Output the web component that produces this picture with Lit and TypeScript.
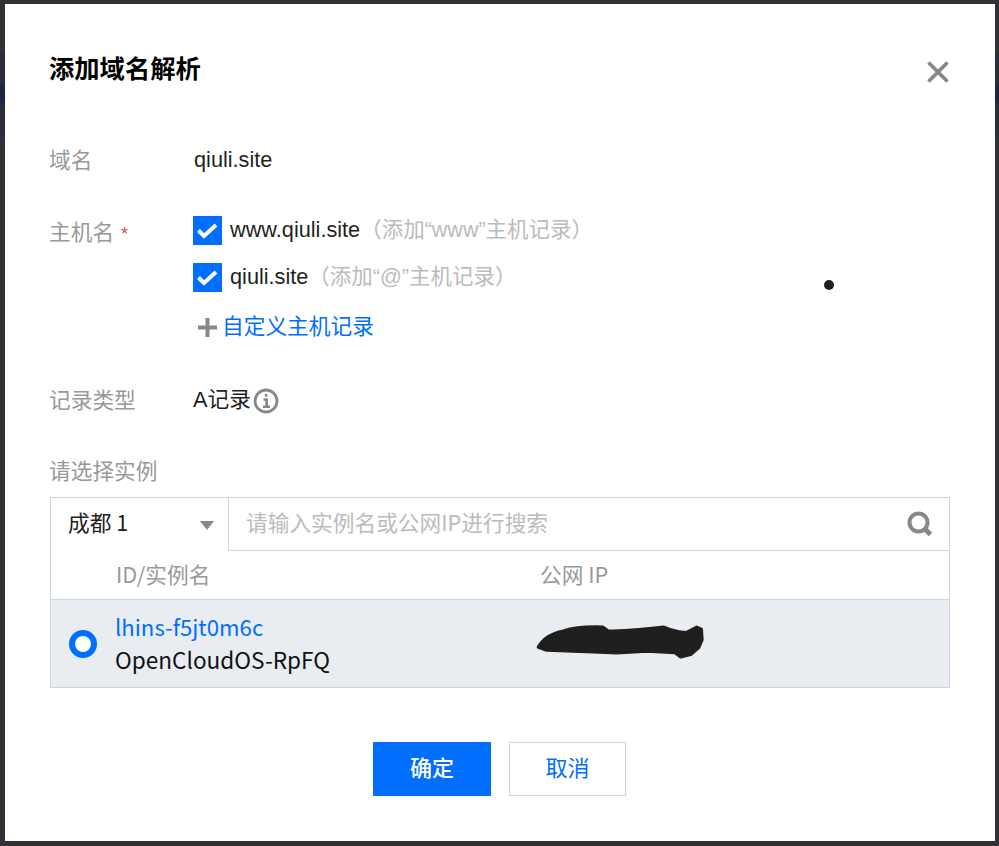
import { LitElement, html, css, svg } from "lit";
import { customElement } from "lit/decorators.js";

const check = html`<svg class="tick" viewBox="0 0 29 29"><path d="M5.5 14.5l5.5 5.5L23 9" fill="none" stroke="#fff" stroke-width="4"/></svg>`;

@customElement("app-root")
export class AppRoot extends LitElement {
  static styles = css`
    :host {
      display: block;
      height: 846px;
      background: #313236;
      font-family: "Liberation Sans", "Noto Sans CJK SC", sans-serif;
      font-size: 21.7px;
      color: #1f1f1f;
      overflow: hidden;
    }
    .stage { position: relative; height: 846px; display: flex; padding: 4px 4px 5px 5px; box-sizing: border-box; }
    .edge { position: absolute; top: 53px; height: 85px; background: #2b2e38; }
    .edge.l { left: 0; width: 5px; }
    .edge.r { right: 0; width: 4px; }
    .edge i { display: block; margin-top: 32px; height: 18px; background: #1d2340; }
    .dialog { position: relative; flex: 1; background: #fff; padding: 0 45px 0 44px; box-sizing: border-box; display: flex; flex-direction: column; }
    h1 { margin: 47px 0 0; font-size: 25.3px; line-height: 36px; font-weight: 700; color: #000; }
    .close { position: absolute; left: 921px; top: 56px; width: 24px; height: 24px; }
    .row { display: flex; }
    .label { width: 144px; flex: none; color: #999; line-height: 32px; }
    .label.low { padding-top: 1px; }
    .r1 { margin-top: 58px; }
    .r2 { margin-top: 39px; }
    .r3 { margin-top: 45px; }
    .star { color: #e54545; font-size: 18px; margin-left: 7px; }
    .val { line-height: 32px; margin: -1px 0 0 1px; }
    .checks { display: flex; flex-direction: column; }
    .chk { display: flex; align-items: center; height: 29px; gap: 8px; margin-bottom: 18px; line-height: 29px; }
    .txt { margin-bottom: 2px; }
    .box { width: 29px; height: 29px; background: #006eff; flex: none; display: block; }
    .tick { display: block; width: 29px; height: 29px; }
    .hint { color: #bbb; font-size: 21.5px; }
    .add { display: flex; align-items: center; height: 32px; margin-top: -2px; padding-left: 5px; color: #006eff; }
    .plus { width: 19px; height: 19px; margin: 7px 5px 0 0; }
    .rec { display: flex; align-items: center; height: 32px; line-height: 32px; margin-top: -1px; }
    .info { width: 26px; height: 26px; margin: 2px 0 0 2px; }
    .pick { margin-top: 39px; color: #999; line-height: 32px; }
    .table { margin: 9px 0 0 1px; border: 1px solid #cfd5de; box-sizing: border-box; height: 191px; display: flex; flex-direction: column; font-family: "Noto Sans CJK SC", sans-serif; }
    .bar { display: flex; height: 53px; flex: none; }
    .bar .t { margin-top: -6px; }
    .select { width: 177px; flex: none; box-sizing: border-box; padding-left: 17px; display: flex; align-items: center; justify-content: space-between; padding-right: 14px; }
    .arrow { width: 14px; height: 9px; margin-top: 2px; }
    .search { flex: 1; border-left: 1px solid #cfd5de; border-bottom: 1px solid #cfd5de; display: flex; align-items: center; justify-content: space-between; padding: 0 16px 0 17px; color: #bbb; }
    .mag { width: 26px; height: 26px; }
    .head { display: flex; height: 49px; flex: none; align-items: center; color: #999; border-bottom: 1px solid #cfd5de; box-sizing: border-box; padding-bottom: 4px; }
    .c1 { width: 489px; padding-left: 65px; box-sizing: border-box; flex: none; }
    .item { flex: 1; display: flex; background: #e9ecf1; align-items: center; }
    .radio { width: 28px; height: 28px; box-sizing: border-box; border: 6px solid #006eff; border-radius: 50%; background: #fff; margin-left: 18px; flex: none; }
    .names { width: 426px; padding-left: 18px; box-sizing: border-box; flex: none; line-height: 33px; color: #111; margin-top: -2px; font-size: 22.6px; }
    .link { color: #006eff; display: block; font-size: 22.2px; }
    .scribble { width: 170px; height: 37px; display: block; margin: -4px 0 0 12px; }
    .foot { display: flex; justify-content: center; gap: 18px; margin-top: 54px; }
    .btn { width: 118px; height: 54px; box-sizing: border-box; display: flex; align-items: center; justify-content: center; padding-bottom: 6px; font-family: "Noto Sans CJK SC", sans-serif; font-size: 22px; }
    .ok { background: #006eff; color: #fff; font-weight: 500; }
    .no { background: #fff; color: #006eff; border: 1px solid #cfd5de; width: 117px; }
    .dot { position: absolute; left: 819px; top: 276px; width: 10px; height: 10px; border-radius: 50%; background: #1f1f1f; }
  `;

  render() {
    const blob = svg`<path fill="#1f1f1f" stroke="#1f1f1f" stroke-width="10" stroke-linejoin="round" d="M55 472C70 445 100 430 130 424C160 414 190 410 248 412L265 424C300 424 340 422 430 412L450 419C470 425 490 428 500 428L530 412L544 418L546 450L536 473L512 494L482 501L464 488L380 484L290 489L220 486L80 481Z"/>`;
    return html`
      <div class="stage">
        <div class="edge l"><i></i></div>
        <div class="edge r"><i></i></div>
        <div class="dialog">
          <h1>添加域名解析</h1>
          <svg class="close" viewBox="0 0 24 24"><path d="M2.5 2.5l19 19M21.5 2.5l-19 19" stroke="#888" stroke-width="3.8" fill="none"/></svg>
          <div class="row r1"><div class="label">域名</div><div class="val">qiuli.site</div></div>
          <div class="row r2">
            <div class="label low">主机名<span class="star">*</span></div>
            <div class="checks">
              <div class="chk"><span class="box">${check}</span><span class="txt">www.qiuli.site<span class="hint">（添加“www”主机记录）</span></span></div>
              <div class="chk"><span class="box">${check}</span><span class="txt">qiuli.site<span class="hint">（添加“@”主机记录）</span></span></div>
              <div class="add"><svg class="plus" viewBox="0 0 19 19"><path d="M9.5 0v19M0 9.5h19" stroke="#888" stroke-width="4" fill="none"/></svg>自定义主机记录</div>
            </div>
          </div>
          <div class="row r3">
            <div class="label">记录类型</div>
            <div class="rec">A记录<svg class="info" viewBox="0 0 26 26"><circle cx="13" cy="13" r="11" fill="none" stroke="#888" stroke-width="2.8"/><path d="M10.5 11.5h3.2v7M10 18.7h7M11.8 7.4h2.6" fill="none" stroke="#888" stroke-width="2.6"/></svg></div>
          </div>
          <div class="pick">请选择实例</div>
          <div class="table">
            <div class="bar">
              <div class="select"><span class="t">成都 1</span><svg class="arrow" viewBox="0 0 14 9"><path d="M0 0h14L7 9z" fill="#888"/></svg></div>
              <div class="search"><span class="t">请输入实例名或公网IP进行搜索</span><svg class="mag" viewBox="0 0 26 26"><circle cx="11.5" cy="11.5" r="9" fill="none" stroke="#888" stroke-width="4"/><path d="M17.5 17.5l6 6" stroke="#888" stroke-width="5"/></svg></div>
            </div>
            <div class="head"><div class="c1">ID/实例名</div><div>公网 IP</div></div>
            <div class="item">
              <div class="radio"></div>
              <div class="names"><span class="link">lhins-f5jt0m6c</span><span>OpenCloudOS-RpFQ</span></div>
              <svg class="scribble" viewBox="45 400 510 110">${blob}</svg>
            </div>
          </div>
          <div class="foot"><div class="btn ok">确定</div><div class="btn no">取消</div></div>
          <div class="dot"></div>
        </div>
      </div>
    `;
  }
}
